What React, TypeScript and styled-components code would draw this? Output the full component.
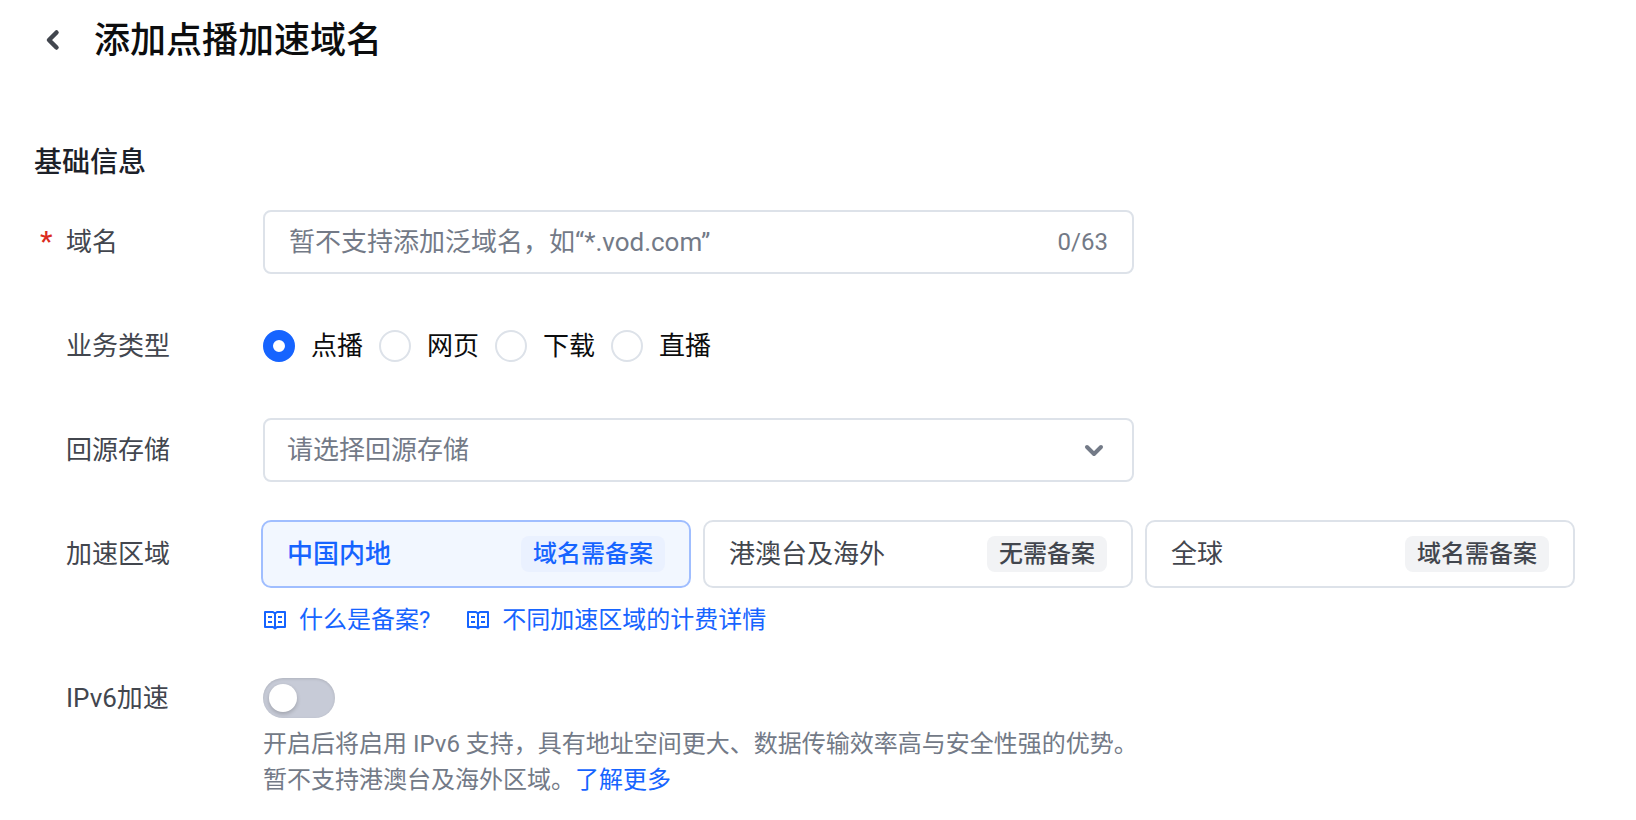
import React, { useState } from "react";
import styled, { createGlobalStyle } from "styled-components";

const color = {
  title: "#0c0d0e",
  heading: "#1d2129",
  text: "#42464e",
  muted: "#737a87",
  border: "#dde2e9",
  primary: "#1664ff",
  danger: "#db2b20",
};

const GlobalStyle = createGlobalStyle`
  *, *::before, *::after { box-sizing: border-box; }
  body {
    margin: 0;
    background: #fff;
    color: ${color.text};
    font-family: Roboto, "Noto Sans CJK SC", sans-serif;
    font-size: 26px;
  }
  button, input, select { font: inherit; }
`;

const Page = styled.main`
  padding: 20px 63px 20px 34px;
`;

const Header = styled.header`
  display: flex;
  align-items: center;
  gap: 28px;
  height: 40px;
  margin-bottom: 82px;
`;

const BackButton = styled.button`
  display: flex;
  align-items: center;
  justify-content: center;
  width: 32px;
  height: 32px;
  padding: 0;
  border: 0;
  background: none;
  color: ${color.text};
  cursor: pointer;
`;

const Title = styled.h1`
  margin: 0;
  padding-top: 2px;
  color: ${color.title};
  font-size: 36px;
  font-weight: 500;
  line-height: 40px;
`;

const SectionTitle = styled.h2`
  margin: 0 0 26px;
  color: ${color.heading};
  font-size: 28px;
  font-weight: 500;
  line-height: 42px;
`;

const Form = styled.form`
  display: flex;
  flex-direction: column;
  gap: 40px;
`;

const Row = styled.div<{ $height?: number }>`
  display: grid;
  grid-template-columns: 229px minmax(0, 1fr);
  --row-height: ${({ $height = 64 }) => $height}px;
`;

const Label = styled.label`
  display: flex;
  height: var(--row-height);
  line-height: var(--row-height);
`;

const Mark = styled.span`
  width: 32px;
  padding-left: 6px;
  flex: none;
  color: ${color.danger};
  font-size: 28px;
  font-weight: 500;
`;

const Field = styled.div`
  display: flex;
  align-items: center;
  position: relative;
  width: 100%;
  max-width: 871px;
  height: 64px;
  padding: 0 24px;
  border: 2px solid ${color.border};
  border-radius: 8px;
`;

const TextInput = styled.input`
  flex: 1;
  min-width: 0;
  height: 100%;
  padding: 0;
  border: 0;
  outline: 0;
  background: none;
  color: ${color.title};
  &::placeholder { color: ${color.muted}; opacity: 1; }
`;

const Counter = styled.output`
  color: ${color.muted};
  font-size: 24px;
`;

const Select = styled.select`
  flex: 1;
  align-self: stretch;
  min-width: 0;
  margin: 0 -24px;
  padding: 0 22px;
  border: 0;
  outline: 0;
  appearance: none;
  background: none;
  color: ${color.muted};
`;

const SelectArrow = styled.span`
  display: flex;
  position: absolute;
  right: 28px;
  color: ${color.muted};
  pointer-events: none;
`;

const RadioGroup = styled.div`
  display: flex;
  align-items: center;
  gap: 16px;
  height: 64px;
`;

const RadioOption = styled.label`
  display: flex;
  align-items: center;
  gap: 16px;
  color: ${color.title};
  line-height: 32px;
`;

const Radio = styled.input`
  width: 32px;
  height: 32px;
  margin: 0;
  appearance: none;
  border: 2px solid ${color.border};
  border-radius: 50%;
  background: #fff;
  &:checked { border: 10px solid ${color.primary}; }
`;

const Cards = styled.div`
  display: grid;
  grid-template-columns: repeat(3, minmax(0, 1fr));
  gap: 12px;
  margin: -2px;
`;

const Card = styled.label<{ $active: boolean }>`
  display: flex;
  align-items: center;
  justify-content: space-between;
  height: 68px;
  padding: 0 24px;
  border: 2px solid ${({ $active }) => ($active ? "#a0beff" : color.border)};
  border-radius: 10px;
  background: ${({ $active }) => ($active ? "#f2f7ff" : "#fff")};
  color: ${({ $active }) => ($active ? color.primary : color.text)};
  font-weight: ${({ $active }) => ($active ? 500 : 400)};
  line-height: 36px;
  white-space: nowrap;
  cursor: pointer;
`;

const CardRadio = styled.input`
  position: absolute;
  appearance: none;
  width: 0;
  height: 0;
  margin: 0;
`;

const Tag = styled.span<{ $active: boolean }>`
  height: 36px;
  padding: 0 12px;
  border-radius: 8px;
  background: ${({ $active }) => ($active ? "#eaf1ff" : "#f2f3f5")};
  font-size: 24px;
  font-weight: 500;
  line-height: 36px;
`;

const Links = styled.div`
  display: flex;
  gap: 36px;
  margin-top: 16px;
`;

const Link = styled.a`
  color: ${color.primary};
  font-size: 24px;
  line-height: 36px;
  text-decoration: none;
`;

const DocLink = styled(Link)`
  display: flex;
  align-items: center;
  gap: 12px;
`;

const Switch = styled.input`
  display: block;
  width: 72px;
  height: 40px;
  margin: 0;
  appearance: none;
  border-radius: 20px;
  background: #c7cbd7;
  box-shadow: inset 0 1px 3px rgba(0, 0, 0, 0.12);
  cursor: pointer;
  &::before {
    content: "";
    display: block;
    width: 28px;
    height: 28px;
    margin: 6px;
    border-radius: 50%;
    background: #fff;
    box-shadow: 0 2px 4px rgba(0, 0, 0, 0.2);
  }
  &:checked { background: ${color.primary}; }
  &:checked::before { margin-left: 38px; }
`;

const Help = styled.p`
  margin: 8px 0 0;
  color: ${color.muted};
  font-size: 24px;
  line-height: 36px;
`;

const BackIcon = () => (
  <svg width="32" height="32" viewBox="0 0 32 32" fill="none" aria-hidden="true">
    <path d="M22.500 8.500 15 16l7.500 7.500" stroke="currentColor" strokeWidth="4.500" strokeLinecap="round" strokeLinejoin="round" />
  </svg>
);

const DownIcon = () => (
  <svg width="20" height="20" viewBox="0 0 20 20" fill="none" aria-hidden="true">
    <path d="m3 7 7 7 7-7" stroke="currentColor" strokeWidth="4" strokeLinecap="round" strokeLinejoin="round" />
  </svg>
);

const BookIcon = () => (
  <svg width="24" height="24" viewBox="0 0 24 24" fill="none" stroke="currentColor" strokeWidth="2" strokeLinejoin="round" aria-hidden="true">
    <path d="M2 4h8l2 1.500L14 4h8v15h-8l-2 1.500L10 19H2zM12 5.500v15M5 9h4M5 14h4M15 9h4M15 14h4" />
  </svg>
);

const services = ["点播", "网页", "下载", "直播"];

const regions = [
  { name: "中国内地", tag: "域名需备案" },
  { name: "港澳台及海外", tag: "无需备案" },
  { name: "全球", tag: "域名需备案" },
];

export default function App() {
  const [domain, setDomain] = useState("");
  const [service, setService] = useState(services[0]);
  const [region, setRegion] = useState(regions[0].name);

  return (
    <Page>
      <GlobalStyle />
      <Header>
        <BackButton type="button" aria-label="返回"><BackIcon /></BackButton>
        <Title>添加点播加速域名</Title>
      </Header>
      <SectionTitle>基础信息</SectionTitle>
      <Form>
        <Row>
          <Label htmlFor="domain"><Mark>*</Mark>域名</Label>
          <Field>
            <TextInput
              id="domain"
              maxLength={63}
              placeholder="暂不支持添加泛域名，如“*.vod.com”"
              value={domain}
              onChange={(e) => setDomain(e.target.value)}
            />
            <Counter htmlFor="domain">{domain.length}/63</Counter>
          </Field>
        </Row>
        <Row>
          <Label as="span" id="service-label"><Mark />业务类型</Label>
          <RadioGroup role="radiogroup" aria-labelledby="service-label">
            {services.map((name) => (
              <RadioOption key={name}>
                <Radio type="radio" name="service" checked={service === name} onChange={() => setService(name)} />
                {name}
              </RadioOption>
            ))}
          </RadioGroup>
        </Row>
        <Row>
          <Label htmlFor="storage"><Mark />回源存储</Label>
          <Field>
            <Select id="storage" defaultValue="">
              <option value="">请选择回源存储</option>
            </Select>
            <SelectArrow><DownIcon /></SelectArrow>
          </Field>
        </Row>
        <Row>
          <Label as="span" id="region-label"><Mark />加速区域</Label>
          <div>
            <Cards role="radiogroup" aria-labelledby="region-label">
              {regions.map(({ name, tag }) => (
                <Card key={name} $active={region === name}>
                  <CardRadio type="radio" name="region" checked={region === name} onChange={() => setRegion(name)} />
                  <span>{name}</span>
                  <Tag $active={region === name}>{tag}</Tag>
                </Card>
              ))}
            </Cards>
            <Links>
              <DocLink href="#filing"><BookIcon />什么是备案?</DocLink>
              <DocLink href="#billing"><BookIcon />不同加速区域的计费详情</DocLink>
            </Links>
          </div>
        </Row>
        <Row $height={40}>
          <Label htmlFor="ipv6"><Mark />IPv6加速</Label>
          <div>
            <Switch id="ipv6" type="checkbox" role="switch" />
            <Help>
              开启后将启用 IPv6 支持，具有地址空间更大、数据传输效率高与安全性强的优势。
              <br />
              暂不支持港澳台及海外区域。<Link href="#ipv6-help">了解更多</Link>
            </Help>
          </div>
        </Row>
      </Form>
    </Page>
  );
}
